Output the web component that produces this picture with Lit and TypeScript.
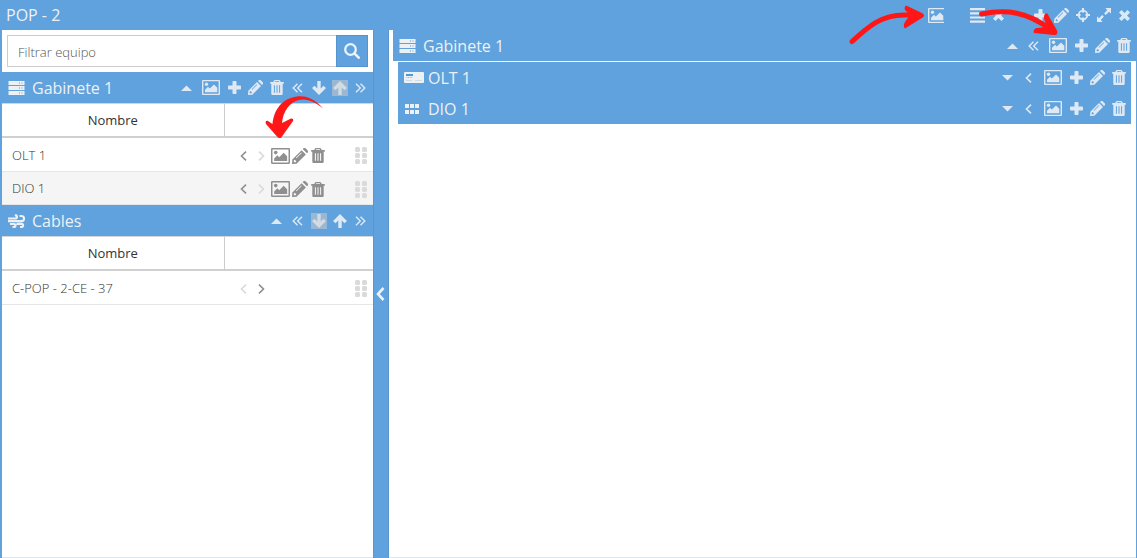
import { LitElement, html, css, svg, nothing } from "lit";
import { customElement, property } from "lit/decorators.js";
import { classMap } from "lit/directives/class-map.js";

type Shape = { box: [number, number]; body: unknown };

const chevron = (d: string, w = 1.6) =>
  svg`<path d=${d} fill="none" stroke="currentColor" stroke-width=${w}/>`;

const ICONS: Record<string, Shape> = {
  server: {
    box: [17, 14],
    body: svg`<path d="M.5 0h16v4H.5zM.5 5h16v4H.5zM.5 10h16v4H.5z"/><path d="M11.500 1v2M14 1v2M11.500 6v2M14 6v2M11.500 11v2M14 11v2" stroke="#9fc4e8" stroke-width="1"/>`,
  },
  wind: {
    box: [17, 14],
    body: svg`<g fill="none" stroke="currentColor" stroke-width="2.200"><path d="M0 4.500h8a1.800 1.800 0 0 0 0-3.200H6.800M0 7.200h13.500a2.600 2.600 0 0 0 0-5.200H11.500M2 10H6a1.500 1.500 0 0 1 0 3H4.500M8.500 9.800h5.500a1.700 1.700 0 0 1 0 3.200h-2"/></g>`,
  },
  olt: {
    box: [20, 11],
    body: svg`<rect width="20" height="11" rx="1"/><path d="M2 2h7v2H2z" fill="#4f97d6"/><path d="M2.500 5.500h6" stroke="#8fbce6" stroke-dasharray="1 .6"/><path d="M2 8.500h6M11 8.500h7" stroke="#cbdcea"/>`,
  },
  dio: {
    box: [20, 10],
    body: svg`<path d="M1 0h4v4H1zM6 0h4v4H6zM11 0h4v4h-4zM1 6h4v4H1zM6 6h4v4H6zM11 6h4v4h-4z"/>`,
  },
  image: {
    box: [18, 15],
    body: svg`<path fill-rule="evenodd" d="M1 0h16a1 1 0 0 1 1 1v13a1 1 0 0 1-1 1H1a1 1 0 0 1-1-1V1a1 1 0 0 1 1-1zm.4 1.300v12.400h15.200V1.300z"/><circle cx="4.500" cy="4.300" r="1.700"/><path d="M3 12.200V9.800l3-3 1.800 1.800L12 4.500l3.300 3.300v4.400z"/>`,
  },
  imageCut: {
    box: [16, 15],
    body: svg`<path d="M16 0H1a1 1 0 0 0-1 1v13a1 1 0 0 0 1 1h15v-1.300H1.400V1.300H16z"/><circle cx="4.500" cy="4.300" r="1.700"/><path d="M3 12.200V9.800l3-3 1.800 1.800L12 4.500l3.300 3.300v4.400z"/>`,
  },
  plus: {
    box: [13, 13],
    body: svg`<path d="M5.300 0h2.400a.8.8 0 0 1 .8.8v3.700h3.700a.8.8 0 0 1 .8.8v2.400a.8.8 0 0 1-.8.8H8.500v3.700a.8.8 0 0 1-.8.8H5.300a.8.8 0 0 1-.8-.8V8.500H.8a.8.8 0 0 1-.8-.8V5.300a.8.8 0 0 1 .8-.8h3.700V.8a.8.8 0 0 1 .8-.8z"/>`,
  },
  pencil: {
    box: [15, 15],
    body: svg`<path fill-rule="evenodd" d="M9 2l4 4-8.700 8.700L0 15l.3-4.300zM1.700 11.700v1.600h1.600l.8-.8-1.600-1.600zM8.700 4.200L3.700 9.200l.5.500L9.200 4.700zM10 1l.7-.7a1.400 1.400 0 0 1 2 0l2 2a1.400 1.400 0 0 1 0 2L14 5z"/>`,
  },
  trash: {
    box: [14, 15],
    body: svg`<path fill-rule="evenodd" d="M5 0h4a1.200 1.200 0 0 1 1.100.8L10.800 2h3v1.700h-1.100v9.700c0 .9-.6 1.600-1.300 1.600H2.600c-.7 0-1.300-.7-1.300-1.600V3.700H.2V2h3L3.900.8A1.200 1.200 0 0 1 5 0zm.2 1.200L4.800 2h4.400l-.4-.8zM3.900 5.200v7.600h1V5.200zm2.600 0v7.600h1V5.200zm2.600 0v7.600h1V5.200z"/>`,
  },
  up: { box: [11, 6], body: svg`<path d="M0 6L5.500.5 11 6z"/>` },
  down: { box: [11, 6], body: svg`<path d="M0 0l5.500 5.500L11 0z"/>` },
  left: { box: [7, 10], body: chevron("M6 .7L1.500 5 6 9.300") },
  right: { box: [7, 10], body: chevron("M1 .7L5.500 5 1 9.300") },
  left2: { box: [11, 10], body: chevron("M5.500.7L1.200 5l4.300 4.300M10 .7L5.700 5 10 9.300", 1.400) },
  right2: { box: [11, 10], body: chevron("M1 .7L5.300 5 1 9.300M5.500.7L9.800 5 5.500 9.300", 1.400) },
  arrowDown: {
    box: [14, 14],
    body: svg`<path d="M5.300 0h3.400v7.600l2.800-2.800L14 7 7 14 0 7l2.500-2.200 2.800 2.800z"/>`,
  },
  arrowUp: {
    box: [14, 14],
    body: svg`<path d="M5.300 14h3.400V6.400l2.800 2.800L14 7 7 0 0 7l2.500 2.200 2.800-2.800z"/>`,
  },
  list: {
    box: [15, 15],
    body: svg`<path d="M0 0h15v2.200H0zM0 4.200h15v2.200H0zM0 8.400h15v2.200H0zM0 12.600h15v2.200H0z"/>`,
  },
  close: {
    box: [11, 11],
    body: svg`<path d="M2.500 0l3 3 3-3L11 2.500l-3 3 3 3L8.500 11l-3-3-3 3L0 8.500l3-3-3-3z"/>`,
  },
  target: {
    box: [14, 14],
    body: svg`<circle cx="7" cy="7" r="4.300" fill="none" stroke="currentColor" stroke-width="1.800"/><path d="M5.900 0h2.200v4.500H5.900zM5.900 9.500h2.200V14H5.900zM0 5.900h4.500v2.200H0zM9.500 5.900H14v2.200H9.500z"/>`,
  },
  expand: {
    box: [14, 14],
    body: svg`<path d="M8.300 0H14v5.700l-1.900-1.900-3.300 3.300-1.700-1.700 3.100-3.300zM5.700 14H0V8.300l1.900 1.900 3.300-3.300 1.700 1.700-3.100 3.300z"/>`,
  },
  search: {
    box: [16, 16],
    body: svg`<path d="M10.600 10.600l4.100 4.100" stroke="currentColor" stroke-width="2.600" stroke-linecap="round"/><circle cx="6.500" cy="6.500" r="5.300" fill="none" stroke="currentColor" stroke-width="2.300"/>`,
  },
  collapse: {
    box: [10, 14],
    body: svg`<path d="M7.500 1L2 7l5.500 6" fill="none" stroke="currentColor" stroke-width="2.600"/>`,
  },
  grip: {
    box: [12, 17],
    body: svg`<rect width="5" height="5" rx="1.500"/><rect x="7" width="5" height="5" rx="1.500"/><rect y="6" width="5" height="5" rx="1.500"/><rect x="7" y="6" width="5" height="5" rx="1.500"/><rect y="12" width="5" height="5" rx="1.500"/><rect x="7" y="12" width="5" height="5" rx="1.500"/>`,
  },
};

const icon = (name: string, scale = 1) => {
  const { box, body } = ICONS[name];
  return html`<svg
    width=${Math.round(box[0] * scale)}
    height=${Math.round(box[1] * scale)}
    viewBox="0 0 ${box[0]} ${box[1]}"
    fill="currentColor"
    aria-hidden="true"
  >${body}</svg>`;
};

const LABELS: Record<string, string> = {
  image: "Imagen", imageCut: "Imagen", plus: "Agregar", pencil: "Editar", trash: "Eliminar",
  up: "Contraer", down: "Expandir", left: "Izquierda", right: "Derecha",
  left2: "Todo a la izquierda", right2: "Todo a la derecha", arrowDown: "Bajar",
  arrowUp: "Subir", list: "Lista", close: "Cerrar", target: "Centrar", expand: "Ampliar",
};

const iconReset = css`
  * { box-sizing: border-box; }
  svg { display: block; }
  button {
    display: flex;
    align-items: center;
    justify-content: center;
    margin: 0;
    padding: 0;
    border: 0;
    background: none;
    color: inherit;
    font: inherit;
    cursor: pointer;
  }
`;

@customElement("tool-bar")
class ToolBar extends LitElement {
  @property({ attribute: false }) items: string[] = [];
  @property() off = "";

  static styles = [
    iconReset,
    css`
      :host { display: flex; align-items: center; color: #dfe9f4; }
      button { width: 21px; height: 21px; }
      .wide { width: 27px; }
      .gap { width: 21px; }
      .off { color: #d3dbe2; cursor: default; }
      .off svg { box-sizing: content-box; padding: 1px; background: #9ab8d3; }
    `,
  ];

  render() {
    return this.items.map((name) =>
      name === "gap"
        ? html`<span class="gap"></span>`
        : html`<button
            class=${classMap({ wide: name === "image", off: name === this.off })}
            aria-label=${LABELS[name]}
            ?disabled=${name === this.off}
          >${icon(name)}</button>`
    );
  }
}

@customElement("title-strip")
class TitleStrip extends LitElement {
  @property() icon = "";
  @property() label = "";
  @property() off = "";
  @property({ attribute: false }) tools: string[] = [];

  static styles = [
    iconReset,
    css`
      :host {
        display: flex;
        align-items: center;
        height: 31px;
        padding: 0 2px 0 6px;
        background: #5fa2dd;
        color: #eef1f4;
        font-size: 16px;
        line-height: 24px;
      }
      .mark { display: flex; width: 24px; }
      .text { flex: 1; font-weight: 400; font-size: 16px; margin: 0; }
    `,
  ];

  render() {
    return html`
      ${this.icon ? html`<span class="mark">${icon(this.icon)}</span>` : nothing}
      <h2 class="text">${this.label}</h2>
      <tool-bar .items=${this.tools} off=${this.off}></tool-bar>
    `;
  }
}

type Row = { name: string; left: boolean; right: boolean; edit: boolean };

@customElement("equipment-table")
class EquipmentTable extends LitElement {
  @property({ attribute: false }) rows: Row[] = [];

  static styles = [
    iconReset,
    css`
      :host { display: block; border-bottom: 1px solid #e6e6e6; }
      table {
        width: 100%;
        table-layout: fixed;
        border-spacing: 0;
        font-size: 13px;
        line-height: 18px;
        color: #333;
      }
      th {
        height: 35px;
        padding: 0;
        border-top: 1px solid #cfd6dd;
        border-bottom: 2px solid #d0d0d0;
        font-weight: 400;
        color: #333;
      }
      .name { width: 60%; border-right: 1px solid #ccc; }
      td { height: 33px; padding: 0 10px; font-weight: 300; }
      tr + tr td { border-top: 1px solid #e6e6e6; background: #f5f5f5; }
      .actions { display: flex; align-items: center; padding-top: 2px; color: #8f8f8f; }
      button { width: 18px; height: 20px; }
      .wide { width: 20px; }
      button:disabled { color: #dadada; cursor: default; }
      .grip { margin: 0 -4px 0 auto; color: #dadada; }
    `,
  ];

  render() {
    return html`<table>
      <thead><tr><th class="name" scope="col">Nombre</th><th></th></tr></thead>
      <tbody>
        ${this.rows.map(
          (r) => html`<tr>
            <td>${r.name}</td>
            <td>
              <div class="actions">
                <button aria-label="Izquierda" ?disabled=${!r.left}>${icon("left")}</button>
                <button aria-label="Derecha" ?disabled=${!r.right}>${icon("right")}</button>
                ${r.edit
                  ? html`<button class="wide" aria-label="Imagen">${icon("image", 1.08)}</button>
                      <button aria-label="Editar">${icon("pencil", 1.05)}</button>
                      <button aria-label="Eliminar">${icon("trash")}</button>`
                  : nothing}
                <span class="grip">${icon("grip")}</span>
              </div>
            </td>
          </tr>`
        )}
      </tbody>
    </table>`;
  }
}

@customElement("app-root")
class AppRoot extends LitElement {
  static styles = [
    iconReset,
    css`
      :host {
        position: relative;
        display: flex;
        flex-direction: column;
        height: 100vh;
        overflow: hidden;
        background: #fff;
        font-family: "Open Sans", sans-serif;
      }
      .top { height: 30px; flex: none; }
      .body { flex: 1; display: flex; min-height: 0; border: solid #5fa2dd; border-width: 0 1px 0 2px; }
      .side { flex: 0 0 371px; border-bottom: 1px solid #dbe6f0; }
      .find { display: flex; padding: 5px; }
      .find input {
        flex: 1;
        min-width: 0;
        height: 32px;
        padding: 1px 10px 0;
        border: 1px solid #ccc;
        border-right: 0;
        border-radius: 0;
        outline: 0;
        font: 300 13px/18px "Open Sans", sans-serif;
        color: #555;
      }
      .find input::placeholder { color: #555; opacity: 1; }
      .find button { width: 32px; height: 32px; background: #5fa2dd; border: 1px solid #5494cf; color: #edf2f7; }
      .split {
        flex: 0 0 16px;
        background: #5fa2dd;
        border: solid #5796cf;
        border-width: 0 1px;
        color: #edf2f7;
      }
      .main { flex: 1; min-width: 0; padding-left: 4px; border-bottom: 1px solid #dbe6f0; }
      .children { margin: 1px 5px 0; }
      .note { position: absolute; fill: #ff1616; stroke: #ff1616; pointer-events: none; }
      .note-row { left: 264px; top: 95px; }
      .note-top { right: 211px; top: 2px; }
      .note-main { right: 77px; top: 4px; }
    `,
  ];

  render() {
    const editTools = ["image", "plus", "pencil", "trash"];
    return html`
      <title-strip
        class="top"
        label="POP - 2"
        .tools=${["imageCut", "gap", "list", "close", "gap", "plus", "pencil", "target", "expand", "close"]}
      ></title-strip>
      <div class="body">
        <aside class="side">
          <form class="find" @submit=${(e: Event) => e.preventDefault()}>
            <input type="text" aria-label="Filtrar equipo" placeholder="Filtrar equipo" />
            <button aria-label="Buscar">${icon("search")}</button>
          </form>
          <title-strip
            icon="server"
            label="Gabinete 1"
            off="arrowUp"
            .tools=${["up", ...editTools, "left2", "arrowDown", "arrowUp", "right2"]}
          ></title-strip>
          <equipment-table
            .rows=${[
              { name: "OLT 1", left: true, right: false, edit: true },
              { name: "DIO 1", left: true, right: false, edit: true },
            ]}
          ></equipment-table>
          <title-strip
            icon="wind"
            label="Cables"
            off="arrowDown"
            .tools=${["up", "left2", "arrowDown", "arrowUp", "right2"]}
          ></title-strip>
          <equipment-table
            .rows=${[{ name: "C-POP - 2-CE - 37", left: false, right: true, edit: false }]}
          ></equipment-table>
        </aside>
        <button class="split" aria-label="Ocultar panel">${icon("collapse")}</button>
        <main class="main">
          <title-strip icon="server" label="Gabinete 1" .tools=${["up", "left2", ...editTools]}></title-strip>
          <div class="children">
            <title-strip icon="olt" label="OLT 1" .tools=${["down", "left", ...editTools]}></title-strip>
            <title-strip icon="dio" label="DIO 1" .tools=${["down", "left", ...editTools]}></title-strip>
          </div>
        </main>
      </div>
      <svg class="note note-row" width="62" height="45" viewBox="264 95 62 45" aria-hidden="true">
        <path stroke="none" d="M323 108.500C314 98 305 95.500 297 96.500c-15 2-23 13-24.500 27.500l-4.500-3c-2-1-3 1-2 3l11 12.500c2 2 4 2 5 0l11-15.500c1-2-1-3-3-2l-8 4c1-12 8-21 17-23 8-2 16 2 24 8.500z"/>
      </svg>
      <svg class="note note-top" width="78" height="44" viewBox="848 2 78 44" aria-hidden="true">
        <path d="M852 41.500C868 27 881 15 904 15h14" fill="none" stroke-width="5" stroke-linecap="round"/>
        <path stroke="none" d="M906 5.500l15 7c4 2 4 4 0 6l-16 10c-2-3-1-5 1-8l4-5.500-5-5c-1-2 0-4 1-4.500z"/>
      </svg>
      <svg class="note note-main" width="82" height="32" viewBox="978 4 82 32" aria-hidden="true">
        <path d="M981.500 14C1007 9 1027 12 1050 29" fill="none" stroke-width="5" stroke-linecap="round"/>
        <path stroke="none" d="M1045 13.500c2-1 3 0 4 3l8 14c1 3 0 5-3 4.500l-20-2c-1-3 1-5 4-5l7-1 .5-5c-2-3-2-6-.5-8.500z"/>
      </svg>
    `;
  }
}
